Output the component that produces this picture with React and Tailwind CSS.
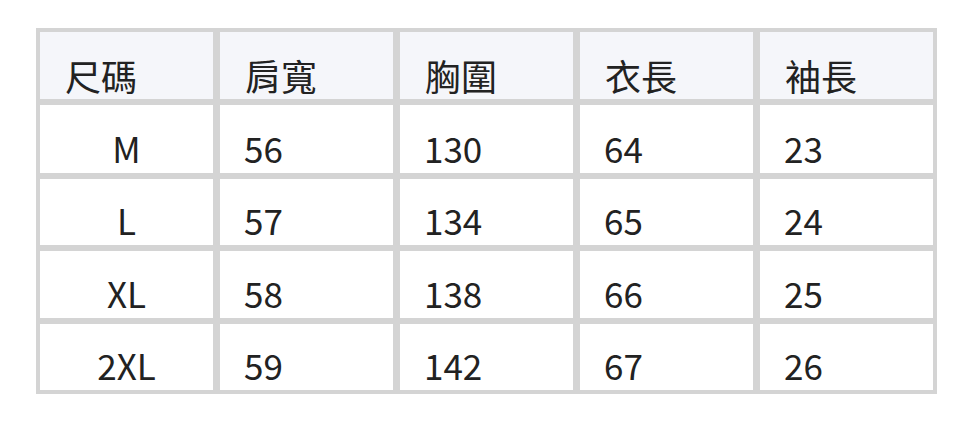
import React from "react";

const head = ["尺碼", "肩寬", "胸圍", "衣長", "袖長"];
const rows = [
  ["M", "56", "130", "64", "23"],
  ["L", "57", "134", "65", "24"],
  ["XL", "58", "138", "66", "25"],
  ["2XL", "59", "142", "67", "26"],
];
const heights = ["h-[68px]", "h-[66px]", "h-[67px]", "h-[66px]"];

export default function App() {
  return (
    <div className="w-[972px] h-[422px] bg-white pt-[28px] pl-[36px] font-['Noto_Sans_CJK_TC','Noto_Sans',sans-serif] text-[#222]">
      <div className="w-[901px] bg-[#d4d4d4] pt-[4px] px-[4px] pb-[4px] flex flex-col gap-[6px]">
        <div className="grid grid-cols-5 gap-x-[7px]">
          {head.map((h) => (
            <div key={h} className="h-[67px] bg-[#f5f6fa] flex items-end pl-[25px] pb-[6px] text-[36px] leading-none">
              {h}
            </div>
          ))}
        </div>
        {rows.map((r, i) => (
          <div key={r[0]} className="grid grid-cols-5 gap-x-[7px]">
            {r.map((c, j) => (
              <div
                key={j}
                className={`${heights[i]} bg-white flex items-end pb-[8px] text-[35px] leading-none ${j === 0 ? "justify-center" : "pl-[24px]"}`}
              >
                {c}
              </div>
            ))}
          </div>
        ))}
      </div>
    </div>
  );
}
